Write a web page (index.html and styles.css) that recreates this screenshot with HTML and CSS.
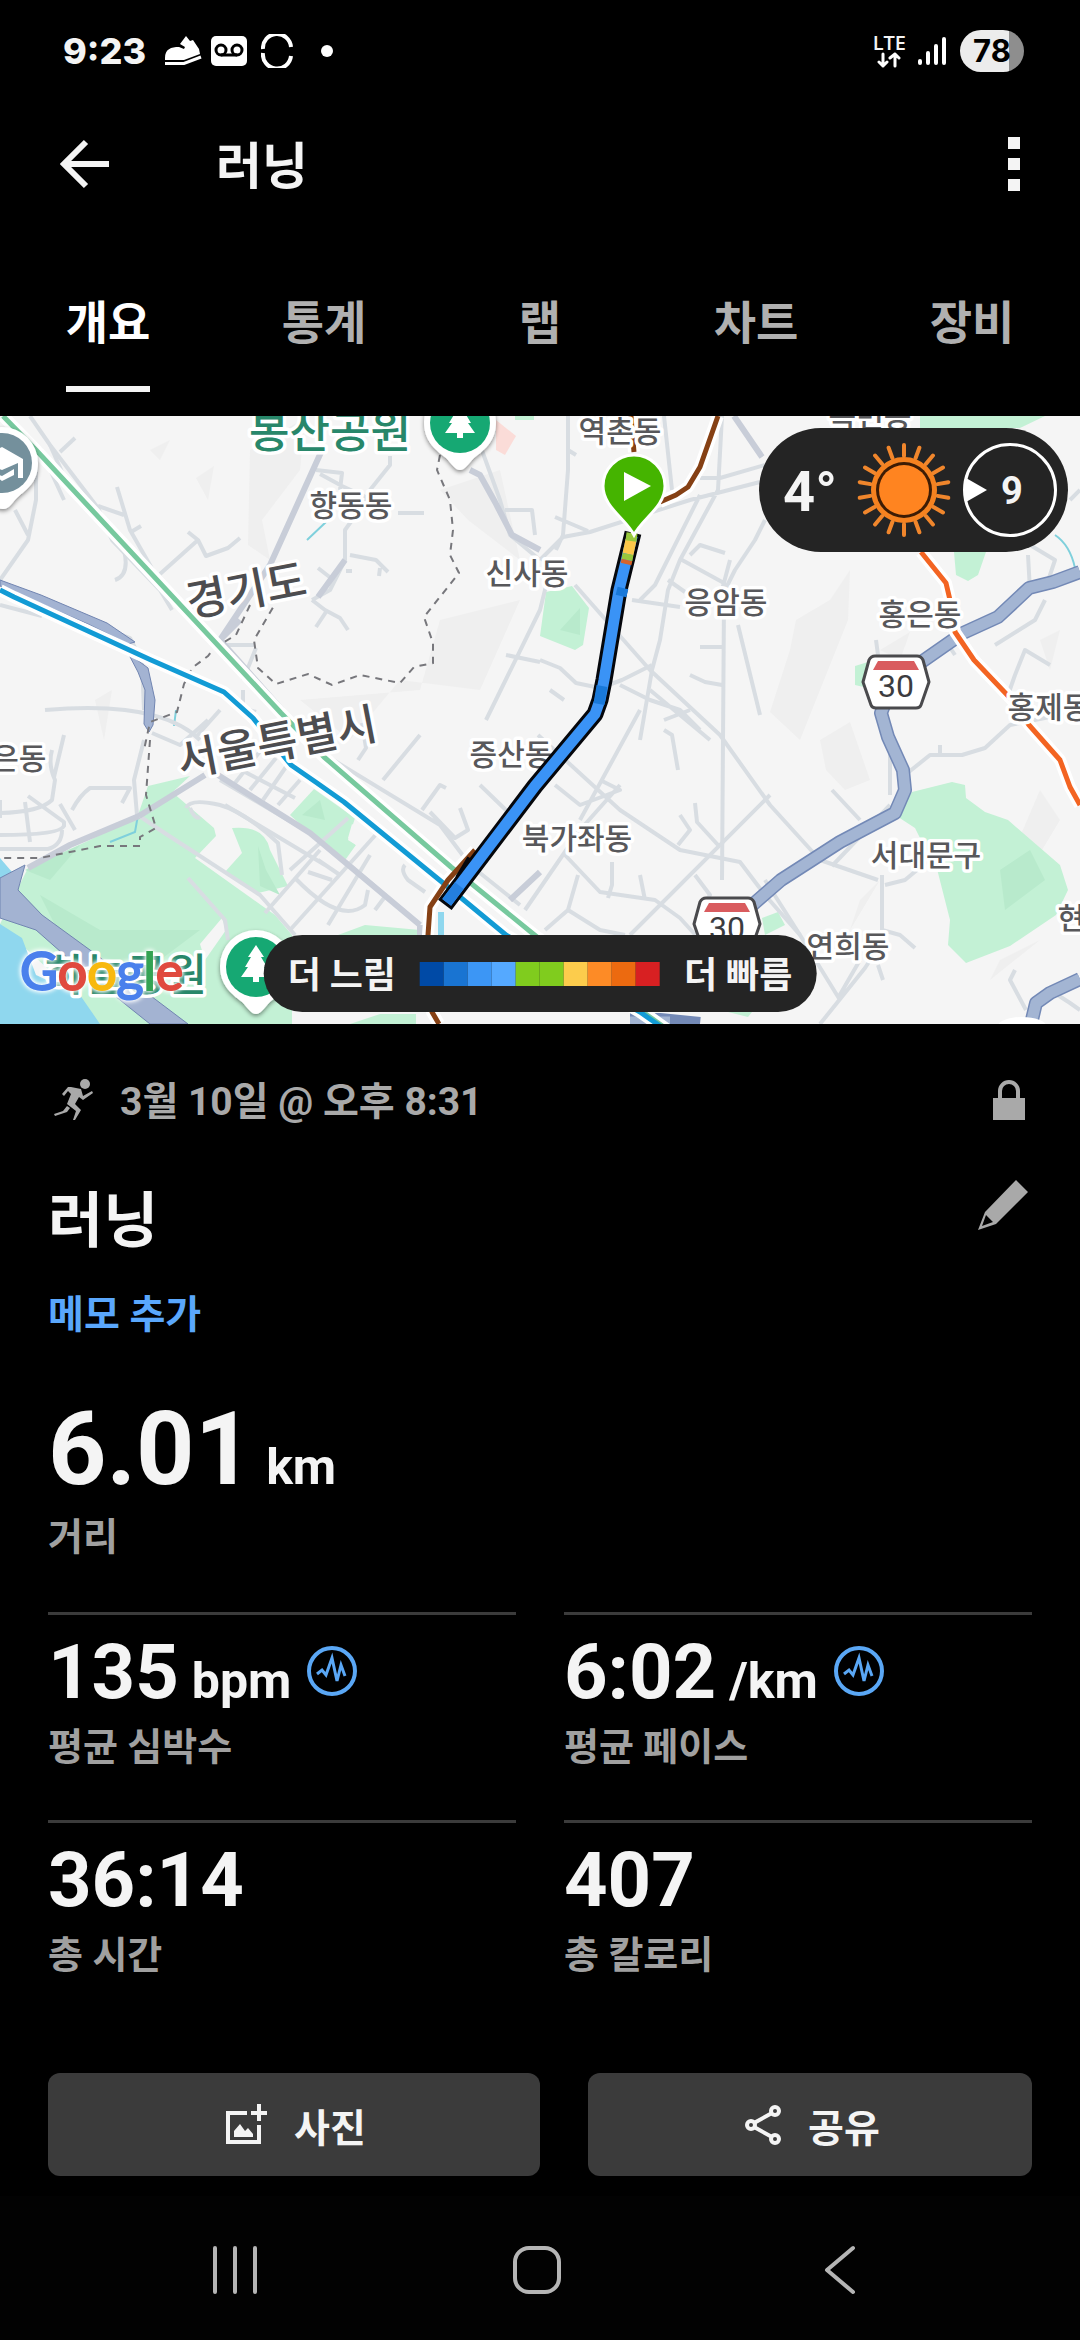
FILE: index.html
```html
<!DOCTYPE html>
<html lang="ko">
<head>
<meta charset="utf-8">
<meta name="viewport" content="width=device-width, initial-scale=1">
<title>러닝</title>
<link rel="stylesheet" href="styles.css">
</head>
<body>
<div class="screen">
  <div class="status">
    <div class="status-left">
      <span class="clock">9:23</span>
      <svg class="shoe" viewBox="0 0 38 32" width="38" height="32" aria-hidden="true">
        <path fill="#fff" d="M1 23C1 14 7 12 15 12L20 14 21 12 16 9 22 1 26 6 29 5 35 14 36 19 20 25H1Z"/>
        <path fill="none" stroke="#fff" stroke-width="3" d="M1 28.500H20L37 22"/>
      </svg>
      <svg class="voicemail" viewBox="0 0 36 30" width="36" height="30" aria-hidden="true">
        <rect width="36" height="30" rx="5" fill="#fff"/>
        <g fill="none" stroke="#000" stroke-width="3"><circle cx="10" cy="14" r="5"/><circle cx="26" cy="14" r="5"/><path d="M10 19H26"/></g>
      </svg>
      <svg class="sync" viewBox="0 0 32 34" width="32" height="34" aria-hidden="true">
        <g fill="none" stroke="#fff" stroke-width="4"><path d="M2 15A14 14 0 0 1 30 13"/><path d="M2 19A14 14 0 0 0 30 22"/></g>
      </svg>
      <span class="dot"></span>
    </div>
    <div class="status-right">
      <div class="lte"><span>LTE</span>
        <svg viewBox="0 0 24 16" width="24" height="16" aria-hidden="true"><path fill="none" stroke="#fff" stroke-width="3" stroke-linecap="round" stroke-linejoin="round" d="M6 2V14M2 10 6 14 10 10M18 14V2M13 6 18 2 22 6"/></svg>
      </div>
      <svg viewBox="0 0 28 30" width="28" height="30" aria-hidden="true"><path fill="none" stroke="#fff" stroke-width="4" stroke-linecap="round" d="M2 25V27M10 17V27M18 10V27M26 3V27"/></svg>
      <span class="battery">78</span>
    </div>
  </div>

  <header class="appbar">
    <button class="icon-btn" aria-label="뒤로">
      <svg viewBox="0 0 50 50" width="50" height="50"><path fill="none" stroke="#f4f4f4" stroke-width="6" d="M26 3 4 25 26 47M5 25H49"/></svg>
    </button>
    <h1>러닝</h1>
    <button class="icon-btn" aria-label="더보기">
      <svg viewBox="0 0 12 54" width="12" height="54"><path fill="#f4f4f4" d="M0 0H12V12H0ZM0 21H12V33H0ZM0 42H12V54H0Z"/></svg>
    </button>
  </header>

  <nav class="tabs" aria-label="활동">
    <button class="tab active"><span>개요</span></button>
    <button class="tab"><span>통계</span></button>
    <button class="tab"><span>랩</span></button>
    <button class="tab"><span>차트</span></button>
    <button class="tab"><span>장비</span></button>
  </nav>

  <section class="map" aria-label="지도">
    <svg class="map-canvas" viewBox="0 416 1080 608" preserveAspectRatio="xMidYMid slice">
      <defs>
        <g id="shield">
          <path fill="#fff" stroke="#4a4a4d" stroke-width="3" stroke-linejoin="round" d="M-21-26H21Q25-26 27-22L33 0 25 23Q24 26 20 26H-20Q-24 26-25 23L-33 0-27-22Q-25-26-21-26Z"/>
          <path fill="#d95c5f" d="M-18-21H18L23-12H-23Z"/>
        </g>
        <g id="tree-pin">
          <path fill="#fff" d="M0 50C-5 50-8 44-14 38-26 29-36 20-36 2A36 36 0 0 1 36 2C36 20 26 29 14 38 8 44 5 50 0 50Z"/>
          <circle r="30" cy="3" fill="#18a873"/>
          <path fill="#fff" d="M0-19 8-7H5L11 3H8L15 13H3V18H-3V13H-15L-8 3H-11L-5-7H-8Z"/>
        </g>
        <filter id="shadow" x="-30%" y="-30%" width="160%" height="160%"><feDropShadow dx="0" dy="2" stdDeviation="2" flood-opacity=".45"/></filter>
      </defs>
      <rect y="416" width="1080" height="608" fill="#f5f5f5"/>

      <!-- hills -->
      <g fill="#efefef">
        <path d="M250 450 305 418 300 470 262 520 270 560 248 545ZM196 478 214 466 208 500ZM440 490 500 470 520 560 468 520ZM440 620 520 600 480 690 400 680 350 740 300 700 420 690ZM850 570 848 620 820 690 800 740 770 712 790 650 796 620 830 600ZM820 740 850 722 870 780 845 790 826 770ZM1040 790 1060 820 1030 870 1010 860ZM1000 960 1040 940 990 980ZM860 900 880 880 850 930ZM95 700 112 690 104 740ZM1040 640 1060 630 1050 670ZM880 650 910 632 900 660ZM150 450 170 440 160 460Z"/>
      </g>

      <!-- parks -->
      <g fill="#c3f1d5">
        <path d="M0 924 28 868 90 840 138 815 148 786H165L214 828 216 836 195 858 275 915 292 935V1024H90L60 980 0 925ZM148 786 190 776 164 800Z"/>
        <path d="M232 828Q265 825 270 850L288 886 258 893 224 873 242 853ZM290 815 314 789 355 818 348 840 356 845 343 863ZM338 935 365 925 420 930 420 940H338Z"/>
        <path d="M546 592 572 586 589 608 583 645 575 650 540 636ZM920 416H1045L1020 428H920ZM954 552 986 552 978 575 968 581 956 575ZM855 666 868 662V688L855 685Z"/>
        <path d="M895 815 912 792 952 782 965 785 966 798 985 812 1008 820 1060 865 1068 890 1056 915 1010 946 966 963 948 945 950 920 936 865 922 842 915 828ZM762 918 778 912 785 925 765 935ZM728 1012H752L748 1017ZM380 1014H416V1024H350ZM515 416H534V420H515Z"/>
      </g>
      <g fill="#b8eacc"><path d="M258 846 266 870 280 895 260 886ZM40 895 100 930 200 930 160 960 110 975 60 935ZM25 870 80 845 50 880ZM1000 870 1030 850 1045 880 1005 910ZM302 815 320 800 325 820ZM560 630 580 608 580 635Z"/></g>
      <path fill="#f5f5f5" d="M200 944 222 918 226 930 205 960ZM348 838 352 824 360 830 356 845Z"/>
      <path fill="#fbdcd8" d="M496 420 516 436 505 455 496 450Z"/>

      <!-- water -->
      <path fill="#8fd7ee" d="M0 924 22 938 36 975 80 995 100 1024H0ZM0 858 12 872 0 880Z"/>
      <path fill="#8fd7ee" d="M438 912H444V935H438Z"/>
      <path fill="none" stroke="#7fd0dc" stroke-width="2" d="M307 540 326 522M110 842 135 832 138 815M176 710 174 726M1055 535Q1070 545 1075 568"/>

      <!-- streets -->
      <g class="street">
        <path d="M30 416 50 445 98 508 112 540 160 590 172 610M64 500 40 448M60 452 75 438M98 506 124 515M117 487 130 530 150 565 158 580M131 532 141 526M160 574 198 540 188 532M198 540 206 556 228 548 240 538M36 455V500L28 540 0 580M15 510 28 535"/>
        <path d="M50 445 70 490 124 550Q130 575 115 580M0 605 42 616M225 645H255M243 690V708L256 712M256 648 243 680M320 474 342 486 368 498 345 530V560L330 590 312 600M316 470 342 473 340 490M370 490 390 465V456M350 555 376 560 388 572M380 568 379 576M352 571H346M318 568 336 582M312 600 325 610 340 618 348 630M326 612 316 627M398 513H424"/>
        <path d="M88 622 130 638 142 662 144 710M45 710Q160 700 200 740M220 710 195 738"/>
        <path d="M54 777 64 735M0 813Q40 812 52 800L55 780Q48 765 52 750M72 810Q80 795 90 788H130L122 803M0 835Q60 835 64 826V822L28 796M0 849H48Q62 845 62 830M25 802 30 842M0 800V818M60 804 75 830"/>
        <path d="M144 740 134 780 137 815M152 733 180 745 208 720M186 808Q190 798 220 805 245 812 278 843L282 875M190 808Q195 820 200 817M188 878 225 920 228 940"/>
        <path d="M220 780 310 833 350 865 420 925M235 783 265 745M250 790 276 758M263 800 288 764M278 805 300 780M245 772 295 798M290 870 348 818M265 913 320 850M290 930 380 830M295 878Q340 925 365 905L368 890M308 872 332 880M318 860 340 875M328 925 370 855M405 865Q400 870 408 880L425 892M375 910 384 898M225 805 325 865"/>
        <path d="M325 755 440 825 470 865 520 905M362 723 366 748 358 760M383 780 420 735M422 810 440 785 446 788M430 812 455 838 468 830 460 808M480 785 508 812"/>
        <path d="M138 815 160 830 260 895 295 935"/>
      </g>
      <g class="street">
        <path d="M568 416V470L563 535 556 550M540 560 563 537 590 532 690 500 760 482M555 517 588 531M568 450 576 455M664 416 672 490M700 478H720L765 465M722 416 718 490 680 560 668 590 660 640 652 670 640 740M700 495 655 585 640 600M632 600 680 607M668 580 685 592M480 445 500 500 510 535 540 560M505 510H532L535 535M682 560 724 583M690 555 700 545 725 553M724 583V600L722 880M765 520 755 540 735 570 725 590M738 625 760 715M700 647H722M690 675 705 682 722 685"/>
        <path d="M575 585 650 670 720 735 770 805 820 860 878 880M540 660 560 668 576 683 600 688 622 680 652 665M620 685 650 700 680 710 700 730M650 690 710 740M486 720 540 610 550 570M506 655 540 662M550 690 564 700M538 735 620 810 680 850 740 862 765 895 800 935M770 795 630 935M555 785 580 805 620 790 600 780M620 785 580 830 525 910M640 710 580 820M565 855 600 892 655 900 680 918 700 940M578 875 568 910 600 930 625 935M568 910 545 930M612 862V885L608 898M640 875 645 900M678 845 690 830 680 815M718 845 697 822 695 803M695 875 710 895 700 910M664 730 672 735 678 770M664 720 690 710"/>
        <path d="M765 880 800 935 840 1000M832 866 890 805M832 790 860 820M890 795V730M890 735 885 705 880 670 876 640M882 875V930L900 935 915 948M885 885 905 880 935 855M905 775 930 755H962L985 748 1010 725 1060 715M940 755V745M1008 695 1015 675 1025 650 1050 665M820 1024 865 968 880 945M838 998 860 960M878 965 883 980M955 655 945 640M1026 1010 1010 980 1015 970M1050 990 1070 1003 1080 1010M995 645 1035 620 1045 600M1030 545 1055 560 1045 590M1028 555 1030 590M1080 490 1070 500M730 560 722 590"/>
      </g>
      <g class="avenue">
        <path d="M322 450 270 565 220 640 240 620M220 640 282 710M470 470 480 475 495 502 512 535 540 550M139 816 205 775M28 868 70 845 139 816M218 775 310 833 420 925M420 925V935M734 416 762 457M510 900 540 872M345 560 318 597"/>
      </g>

      <!-- expressways -->
      <path fill="#a3b3d2" stroke="#7185b1" stroke-width="1" d="M0 878 25 865 18 890 42 915 90 950 188 1024H150L70 960 36 930 0 918Z"/>
      <path fill="#a3b3d2" stroke="#7185b1" stroke-width="1" d="M0 580 41 595 107 623 135 642 128 644 88 624 0 586ZM128 653 148 668 155 700 153 725 149 732 144 724 145 690 138 672Z"/>
      <g class="river-case"><path d="M1080 572 1053 582 1029 588 998 617 963 633 920 663 890 690 881 713 888 737 903 770 905 790 895 813 840 842 781 880 750 907M1080 979 1050 993 1036 1003 1031 1024M630 1020H660L700 1024"/></g>
      <g class="river"><path d="M1080 572 1053 582 1029 588 998 617 963 633 920 663 890 690 881 713 888 737 903 770 905 790 895 813 840 842 781 880 750 907M1080 979 1050 993 1036 1003 1031 1024M630 1022H670"/></g>

      <!-- boundaries -->
      <path class="border" d="M440 455 437 470 450 500 453 530 450 555 459 573 424 617 433 643 433 663 414 667 400 683 360 675 332 685 308 674 276 684 258 668 254 640 275 604M250 605 236 635 214 648 208 656 192 668 184 684 177 712 150 722 144 750M150 740 146 795 156 828 140 837V846L100 846 40 858H0"/>

      <!-- rail lines -->
      <g class="rail-case"><path d="M3 416 36 450 281 713 324 757 451 867 537 937 640 1010 668 1030M0 590 14 597 151 660 224 692 253 718 291 765 317 783 344 802 448 887 506 935 640 1012 660 1026M631 416 634 452M718 416 700 467 688 487 676 495 660 502M475 850 448 880 430 907 428 935 432 1012 439 1024M921 552 946 583 950 600 955 632 974 660 1012 700 1029 725 1060 760 1070 787 1080 805"/></g>
      <g class="rail">
        <path stroke="#77c99e" d="M3 416 36 450 281 713 324 757 451 867 537 937 640 1010 668 1030"/>
        <path stroke="#129bd5" d="M0 590 14 597 151 660 224 692 253 718 291 765 317 783 344 802 448 887 506 935 640 1012 660 1026"/>
        <path stroke="#854014" d="M631 416 634 452M718 416 700 467 688 487 676 495 660 502M475 850 448 880 430 907 428 935 432 1012 439 1024"/>
        <path stroke="#f36422" d="M921 552 946 583 950 600 955 632 974 660 1012 700 1029 725 1060 760 1070 787 1080 805"/>
      </g>

      <g class="place">
        <text x="351" y="516">향동동</text>
        <text x="620" y="442">역촌동</text>
        <text x="527" y="584">신사동</text>
        <text x="726" y="613">응암동</text>
        <text x="870" y="427">녹번동</text>
        <text x="920" y="625">홍은동</text>
        <text x="1049" y="718">홍제동</text>
        <text x="5" y="769">덕은동</text>
        <text x="511" y="765">증산동</text>
        <text x="577" y="849">북가좌동</text>
        <text x="926" y="866">서대문구</text>
        <text x="848" y="957">연희동</text>
        <text x="1085" y="929">현저</text>
      </g>
      <g class="region">
        <text x="246" y="606" transform="rotate(-11 247 590)">경기도</text>
        <text x="277" y="758" transform="rotate(-11 277 742)">서울특별시</text>
      </g>
      <g class="park">
        <text x="330" y="448">봉산공원</text>
        <text x="126" y="991">하늘공원</text>
      </g>

      <g filter="url(#shadow)"><use href="#tree-pin" x="460" y="420"/></g>
      <g filter="url(#shadow)"><use href="#tree-pin" x="256" y="964"/></g>
      <g filter="url(#shadow)">
        <path fill="#fff" d="M3 509C10 509 12 502 19 496 30 487 38 480 38 463A36 36 0 0 0-34 463C-34 480-18 495-12 500-5 507-2 509 3 509Z"/>
      </g>
      <circle cx="2" cy="463" r="30" fill="#74909c"/>
      <path fill="#fff" d="M-20 459 2 447 23 459V478H18V463L2 470-20 462ZM-12 471 2 476 14 469V475L2 481Z"/>

      <use href="#shield" x="896" y="682"/><text class="shield-no" x="896" y="697">30</text>
      <use href="#shield" x="727" y="924"/><text class="shield-no" x="727" y="939">30</text>
      <ellipse cx="1022" cy="1026" rx="24" ry="9" fill="#fff"/>

      <!-- recorded track -->
      <g class="track">
        <path stroke="#05070c" stroke-width="17" stroke-linecap="square" d="M631 541 619 590 604 680 600 700 595 714 535 786 450 898"/>
        <path stroke="#05070c" stroke-width="6" d="M470 858 458 878"/>
        <path stroke="#3a93f6" stroke-width="11" stroke-linecap="square" d="M631 541 619 590 604 680 600 700 595 714 535 786 450 898"/>
        <path stroke="#1979da" stroke-width="11" d="M623 588 621 596M602 686 599 704"/>
        <path stroke="#247fdf" stroke-width="11" stroke-linecap="square" d="M456 890 450 898"/>
        <path stroke="#fcc74a" stroke-width="11" d="M631 540 628 554"/>
        <path stroke="#98c83c" stroke-width="11" d="M632 533 631 541M628 554 627 560"/>
        <path stroke="#d7642a" stroke-width="11" d="M627 560 626 564"/>
      </g>
      <path fill="#45b400" stroke="#fff" stroke-width="3" d="M634 535C626 519 603 507 603 486A31 31 0 0 1 665 486C665 507 642 519 634 535Z"/>
      <path fill="#fff" d="M624 472 651 486 624 501Z"/>
    </svg>

    <div class="google" aria-label="Google"><span class="g-blue">G</span><span class="g-red">o</span><span class="g-yellow">o</span><span class="g-blue">g</span><span class="g-green">l</span><span class="g-red">e</span></div>

    <div class="weather">
      <span class="temp">4°</span>
      <svg viewBox="-47 -47 94 94" width="94" height="94" aria-label="맑음">
        <circle r="30" fill="none" stroke="#f58220" stroke-width="6"/>
        <circle r="28" fill="#3d1c05"/><circle r="25" fill="#ff8420"/>
        <g stroke="#f0862c" stroke-width="4" stroke-linecap="round">
          <path d="M0-34V-45M0 34V45"/>
          <path d="M0-34V-45M0 34V45" transform="rotate(20)"/><path d="M0-34V-45M0 34V45" transform="rotate(40)"/>
          <path d="M0-34V-45M0 34V45" transform="rotate(60)"/><path d="M0-34V-45M0 34V45" transform="rotate(80)"/>
          <path d="M0-34V-45M0 34V45" transform="rotate(100)"/><path d="M0-34V-45M0 34V45" transform="rotate(120)"/>
          <path d="M0-34V-45M0 34V45" transform="rotate(140)"/><path d="M0-34V-45M0 34V45" transform="rotate(160)"/>
        </g>
      </svg>
      <span class="wind">9</span>
    </div>

    <div class="legend">
      <span>더 느림</span>
      <div class="scale"><i class="s1"></i><i class="s2"></i><i class="s3"></i><i class="s4"></i><i class="s5"></i><i class="s5"></i><i class="s6"></i><i class="s7"></i><i class="s8"></i><i class="s9"></i></div>
      <span>더 빠름</span>
    </div>
  </section>

  <main class="details">
    <div class="meta">
      <svg viewBox="0 0 40 42" width="40" height="42" aria-hidden="true">
        <circle cx="32" cy="5" r="5" fill="#a9a9a9"/>
        <path fill="#a9a9a9" d="M18 8 28 10 30 17 39 12 40 14 30 21 26 18 22 25 28 31 22 41 20 41 23 32 14 25 18 15 15 12 11 17 9 15 15 8ZM14 27 17 29 14 33 2 37 1 35 10 32Z"/>
      </svg>
      <time>3월 10일 @ 오후 8:31</time>
      <svg class="lock" viewBox="0 0 32 40" width="32" height="40" aria-label="비공개">
        <path fill="#a9a9a9" d="M0 18H32V40H0Z"/><path fill="none" stroke="#a9a9a9" stroke-width="4" d="M7 19V11A9 9 0 0 1 25 11V19"/>
      </svg>
    </div>
    <div class="title-row">
      <h2>러닝</h2>
      <button class="icon-btn" aria-label="편집">
        <svg viewBox="0 0 50 50" width="50" height="50"><path fill="#a9a9a9" fill-rule="evenodd" d="M38 0 50 12 18 44 0 50 7 32ZM8 35 4 46 15 42Z"/></svg>
      </button>
    </div>
    <a class="memo" href="#memo">메모 추가</a>

    <div class="stat-main">
      <div class="value big"><b>6.01</b><span class="unit">km</span></div>
      <div class="label">거리</div>
    </div>

    <div class="stats">
      <div class="stat">
        <div class="value"><b>135</b><span class="unit">bpm</span>
          <svg class="pulse" viewBox="0 0 50 50" width="50" height="50" aria-hidden="true"><circle cx="25" cy="25" r="23"/><path d="M10 28 15 24 19 29 25 12 30 35 34 19 38 30"/></svg>
        </div>
        <div class="label">평균 심박수</div>
      </div>
      <div class="stat">
        <div class="value"><b>6:02</b><span class="unit">/km</span>
          <svg class="pulse" viewBox="0 0 50 50" width="50" height="50" aria-hidden="true"><circle cx="25" cy="25" r="23"/><path d="M10 28 15 24 19 29 25 12 30 35 34 19 38 30"/></svg>
        </div>
        <div class="label">평균 페이스</div>
      </div>
      <div class="stat">
        <div class="value"><b>36:14</b></div>
        <div class="label">총 시간</div>
      </div>
      <div class="stat">
        <div class="value"><b>407</b></div>
        <div class="label">총 칼로리</div>
      </div>
    </div>

    <div class="actions">
      <button class="action photo">
        <svg viewBox="0 0 42 42" width="42" height="42" aria-hidden="true"><path fill="none" stroke="#f4f4f4" stroke-width="4" d="M21 9H2V38H33V21M25 9H41M33 0V17"/><path fill="#f4f4f4" d="M8 33V27L14 20 19 27 22 24 27 30V33Z"/></svg>
        사진
      </button>
      <button class="action share">
        <svg viewBox="0 0 38 42" width="38" height="42" aria-hidden="true"><g fill="none" stroke="#f4f4f4" stroke-width="4"><circle cx="31" cy="7" r="4"/><circle cx="7" cy="21" r="4"/><circle cx="31" cy="35" r="4"/><path d="M10 19 28 9M10 23 28 33"/></g></svg>
        공유
      </button>
    </div>
  </main>

  <nav class="sysnav" aria-label="시스템">
    <button class="icon-btn" aria-label="최근 앱"><svg viewBox="0 0 48 50" width="48" height="50"><path d="M4 3V47M24 3V47M44 3V47"/></svg></button>
    <button class="icon-btn" aria-label="홈"><svg viewBox="0 0 50 50" width="50" height="50"><rect x="3" y="3" width="44" height="44" rx="14"/></svg></button>
    <button class="icon-btn" aria-label="이전"><svg viewBox="0 0 32 50" width="32" height="50"><path d="M29 3 3 25 29 47"/></svg></button>
  </nav>
</div>
</body>
</html>
```

FILE: styles.css
```css
* { box-sizing: border-box; }
body {
  margin: 0;
  background: #000;
  color: #f4f4f4;
  font-family: Roboto, "Noto Sans CJK KR", sans-serif;
}
button {
  margin: 0;
  padding: 0;
  border: 0;
  background: none;
  color: inherit;
  font: inherit;
}
svg { display: block; flex: none; }
h1, h2 { margin: 0; font-weight: 700; }
.screen { min-height: 100vh; display: flex; flex-direction: column; }

/* status bar */
.status {
  height: 100px;
  padding: 2px 56px 0 63px;
  display: flex;
  align-items: center;
  justify-content: space-between;
}
.status-left, .status-right { display: flex; align-items: center; }
.clock { font: 800 36px/48px Inter, sans-serif; margin-right: 18px; }
.shoe { margin-right: 9px; }
.voicemail { margin-right: 14px; }
.sync { margin-right: 28px; }
.dot { width: 12px; height: 12px; border-radius: 50%; background: #fff; }
.status-right { gap: 12px; }
.lte { display: flex; flex-direction: column; align-items: center; font: 600 20px/18px "Open Sans", sans-serif; }
.battery {
  width: 64px;
  margin-left: 2px;
  border-radius: 21px;
  background: linear-gradient(90deg, #ececec 0 49px, #8e8e8e 49px);
  color: #000;
  font: 700 31px/42px Inter, sans-serif;
  text-align: center;
}

/* app bar */
.appbar { height: 128px; padding: 0 60px; display: flex; align-items: center; }
.appbar h1 { flex: 1; margin-left: 106px; padding-top: 5px; font-size: 50px; line-height: 64px; }

/* tabs */
.tabs { display: grid; grid-template-columns: repeat(5, 1fr); padding: 65px 0 24px; }
.tab { color: #b0b0b0; font-size: 46px; font-weight: 700; line-height: 60px; }
.tab span { display: inline-block; padding-bottom: 33px; border-bottom: 6px solid transparent; vertical-align: top; }
.tab.active { color: #fff; }
.tab.active span { border-color: #f4f4f4; }

/* map */
.map { position: relative; overflow: hidden; }
.map-canvas { width: 100%; height: auto; }
.street { fill: none; stroke: #d8dde2; stroke-width: 4; stroke-linejoin: round; }
.avenue { fill: none; stroke: #c8cdd8; stroke-width: 6; stroke-linejoin: round; }
.river { fill: none; stroke: #a3b5d3; stroke-width: 11; stroke-linejoin: round; }
.river-case { fill: none; stroke: #7389b6; stroke-width: 14; stroke-linejoin: round; }
.border { fill: none; stroke: #77777c; stroke-width: 2; stroke-dasharray: 7 6; }
.rail { fill: none; stroke-width: 5; stroke-linejoin: round; }
.rail-case { fill: none; stroke: #fff; stroke-width: 12; stroke-linejoin: round; }
.track { fill: none; stroke-linejoin: round; }
.place, .region, .park {
  font-weight: 500;
  text-anchor: middle;
  paint-order: stroke;
  stroke: #fff;
  stroke-width: 7px;
  stroke-linejoin: round;
}
.place { font-size: 30px; fill: #58585b; }
.region { font-size: 44px; fill: #4d4d50; }
.park { font-size: 44px; fill: #28876a; }
.shield-no { font-size: 32px; font-weight: 400; text-anchor: middle; fill: #3c3c3f; }

.google {
  position: absolute;
  left: 20px;
  bottom: 22px;
  font: 400 52px/64px Lato, sans-serif;
  -webkit-text-stroke: 2px currentColor;
  filter: drop-shadow(0 0 2px #fff) drop-shadow(0 0 2px #fff);
}
.g-blue { color: #4a80ec; }
.g-red { color: #e04a3f; }
.g-yellow { color: #f8b90f; }
.g-green { color: #34a353; }

.weather {
  position: absolute;
  top: 12px;
  right: 12px;
  height: 124px;
  padding: 0 11px 0 24px;
  border-radius: 62px;
  background: #242424;
  display: flex;
  align-items: center;
}
.temp { width: 50px; margin-right: 24px; padding-top: 4px; font-size: 56px; font-weight: 700; line-height: 64px; }
.weather svg { margin-right: 12px; }
.wind {
  position: relative;
  width: 94px;
  height: 94px;
  padding-left: 4px;
  border: 3px solid #fff;
  border-radius: 50%;
  font-size: 38px;
  font-weight: 700;
  line-height: 90px;
  text-align: center;
}
.wind::before {
  content: "";
  position: absolute;
  left: 0;
  top: 32px;
  border-left: 21px solid #fff;
  border-top: 12px solid transparent;
  border-bottom: 12px solid transparent;
}

.legend {
  position: absolute;
  left: 50%;
  bottom: 12px;
  transform: translateX(-50%);
  height: 77px;
  padding: 0 24px;
  border-radius: 39px;
  background: #242424;
  display: flex;
  align-items: center;
  gap: 24px;
  font-size: 36px;
  font-weight: 700;
  line-height: 48px;
  white-space: nowrap;
}
.legend span { padding-top: 4px; }
.scale { display: grid; grid-template-columns: repeat(10, 24px); height: 24px; }
.s1 { background: #004aa6; }
.s2 { background: #1974d2; }
.s3 { background: #3c96f5; }
.s4 { background: #55a9ff; }
.s5 { background: #80cc1e; }
.s6 { background: #fccc4c; }
.s7 { background: #fd8b26; }
.s8 { background: #ec6a10; }
.s9 { background: #d82022; }

/* details */
.details { padding: 48px 48px 20px; }
.meta {
  display: flex;
  align-items: center;
  height: 56px;
  padding: 0 7px 0 5px;
  color: #a9a9a9;
  font-size: 39px;
  font-weight: 700;
}
.meta time { flex: 1; margin-left: 27px; padding-top: 3px; line-height: 56px; }
.title-row { display: flex; justify-content: space-between; align-items: flex-start; padding: 52px 4px 0 0; }
.title-row h2 { font-size: 60px; line-height: 84px; }
.memo {
  display: block;
  margin-top: 26px;
  color: #5aa7fc;
  font-size: 39px;
  font-weight: 700;
  line-height: 50px;
  text-decoration: none;
}
.stat-main { margin: 56px 0 50px; }
.value { display: flex; align-items: baseline; height: 78px; font-size: 76px; line-height: 80px; }
.value.big { height: 104px; font-size: 102px; line-height: 106px; }
.value b { font-weight: 700; }
.unit { margin-left: 13px; font-size: 50px; font-weight: 700; line-height: 50px; }
.pulse { align-self: center; margin-left: 16px; fill: none; stroke: #5aa7f5; stroke-width: 4; }
.pulse path { stroke-width: 3; }
.label { margin-top: 12px; color: #a0a0a0; font-size: 38px; font-weight: 700; line-height: 50px; }
.stats { display: grid; grid-template-columns: 1fr 1fr; column-gap: 48px; }
.stat { padding: 17px 0 48px; border-top: 3px solid #3b3b3b; }
.actions { display: flex; gap: 48px; margin-top: 45px; }
.action {
  height: 103px;
  padding-left: 4px;
  border-radius: 12px;
  background: #3b3b3b;
  display: flex;
  align-items: center;
  justify-content: center;
  gap: 26px;
  font-size: 39px;
  font-weight: 700;
}
.photo { flex: 492; }
.share { flex: 444; }

/* system navigation */
.sysnav {
  flex: 1;
  min-height: 144px;
  padding: 4px 89px 0 84px;
  background: #020202;
  display: grid;
  grid-template-columns: repeat(3, 1fr);
  align-items: center;
  justify-items: center;
}
.sysnav svg { fill: none; stroke: #b5b5b5; stroke-width: 4; stroke-linecap: round; stroke-linejoin: round; }
```
